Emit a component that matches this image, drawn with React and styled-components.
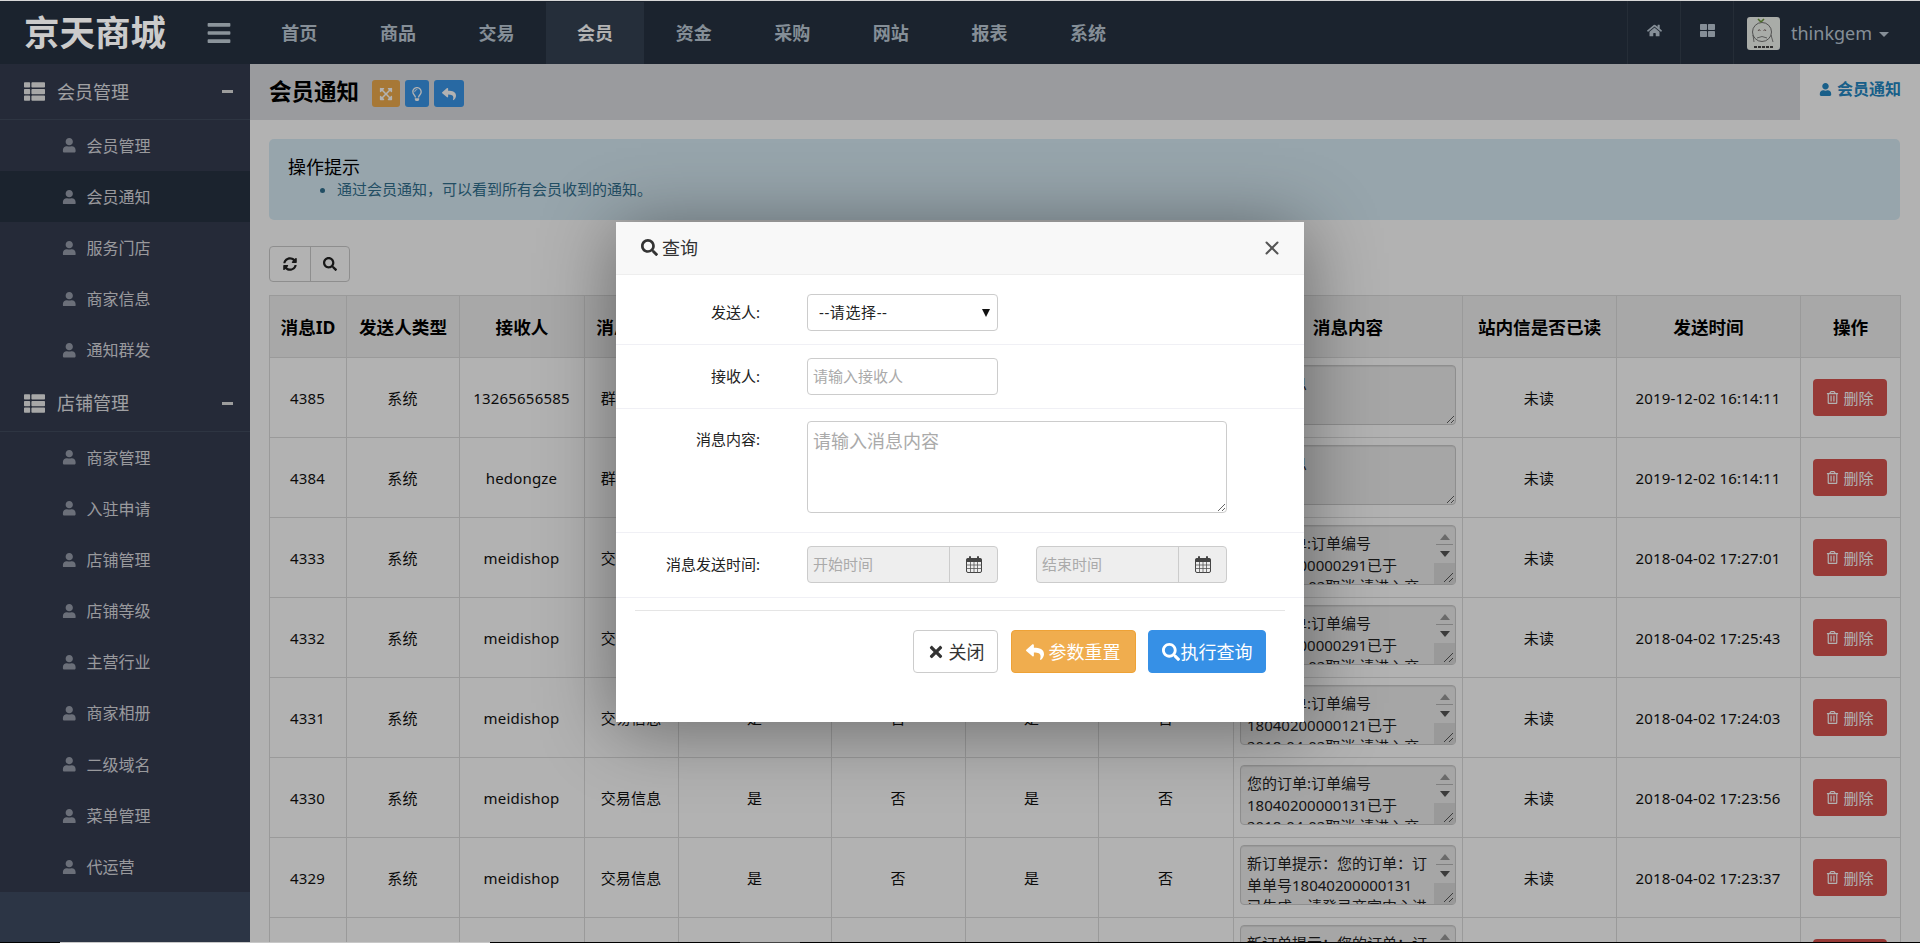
import React from 'react';
import styled, { createGlobalStyle } from 'styled-components';
import { FaBars, FaHome, FaThLarge, FaThList, FaUser, FaExpandArrowsAlt, FaRegLightbulb, FaReply, FaSyncAlt, FaSearch, FaRegTrashAlt, FaTimes } from 'react-icons/fa';
import { X } from 'lucide-react';

const Global = createGlobalStyle`
  html, body { margin: 0; padding: 0; background: #fff; }
  * { box-sizing: border-box; }
  body, input, select, textarea, button {
    font-family: "Noto Sans", "Noto Sans CJK SC", sans-serif;
  }
`;

const Page = styled.div`
  position: relative; width: 1920px; height: 943px; overflow: hidden;
  display: flex; flex-direction: column; font-size: 15px; line-height: 20px; color: #222;
`;
const TopLine = styled.div`flex: 0 0 1px; background: #d8d8d8;`;
const BottomStrip = styled.div`flex: 0 0 1px; display: flex; background: #000;`;
const StripPart = styled.div`flex: 0 0 ${p => p.$w}px; background: ${p => p.$c};`;

const Header = styled.header`flex: 0 0 63px; display: flex; align-items: stretch; background: #283343;`;
const Brand = styled.div`flex: 0 0 250px; display: flex; align-items: center; padding-left: 24px;`;
const Logo = styled.div`
  position: relative; z-index: 200; width: 182px; font-size: 35.5px; line-height: 48px; font-weight: 700;
  color: #cbcbcb; margin-top: -1px;
`;
const Burger = styled.div`display: flex; color: #c8d4de; font-size: 26px;`;
const NavItem = styled.div`
  flex: 0 0 98.6px; display: flex; align-items: center; justify-content: center;
  font-size: 18px; font-weight: 700; margin-top: 1px;
  color: ${p => p.$active ? '#fff' : '#bfccd8'};
  background: ${p => p.$active ? '#364254' : 'transparent'};
`;
const Spacer = styled.div`flex: 1;`;
const ToolIcon = styled.div`
  flex: 0 0 53px; display: flex; align-items: center; justify-content: center;
  border-left: 1px solid #36414f; color: #bfccd8; font-size: 15px; padding-bottom: 4px;
`;
const UserBox = styled.div`
  flex: 0 0 187px; display: flex; align-items: center; padding-left: 13px;
  border-left: 1px solid #36414f; color: #bfccd8; font-size: 18px;
`;
const Avatar = styled.svg`display: block; flex: none; width: 33px; height: 33px; border-radius: 3px; margin-right: 11px; margin-top: 1px;`;
const Caret = styled.span`
  margin-left: 7px; margin-top: 3px; width: 0; height: 0;
  border-left: 5px solid transparent; border-right: 5px solid transparent; border-top: 5px solid #bfccd8;
`;

const Body = styled.div`flex: 1; min-height: 0; display: flex;`;
const Sidebar = styled.aside`flex: 0 0 250px; background: #3f4c63;`;
const Menu = styled.nav`height: 828px; overflow: hidden; background: #353d51;`;
const SectionHead = styled.div`
  height: 56px; display: flex; align-items: center; padding: 0 17px 0 24px;
  border-bottom: 1px solid #434c5f; color: #e6e6ea; font-size: 18px; line-height: 26px;
`;
const SectionIcon = styled.span`display: flex; font-size: 21px; color: #f0f0f0; margin-right: 12px;`;
const SectionText = styled.span`flex: 1;`;
const Minus = styled.span`width: 11px; height: 3px; background: #e0e0e0;`;
const Item = styled.div`
  height: 51.2px; display: flex; align-items: center; padding-left: 62px;
  font-size: 16px; color: #dcdce0;
  background: ${p => p.$active ? '#283343' : 'transparent'};
`;
const ItemIcon = styled.span`display: flex; font-size: 14.5px; color: #9aa0ae; margin-right: 10px;`;

const Main = styled.main`flex: 1; min-width: 0; overflow: hidden;`;
const TitleRow = styled.div`height: 56px; display: flex;`;
const TitleBar = styled.div`flex: 1; display: flex; align-items: center; padding-left: 19px; background: #dddfe3;`;
const Title = styled.h1`margin: 0 13px 0 0; font-size: 22.5px; line-height: 30px; font-weight: 700; color: #000;`;
const MiniBtn = styled.span`
  height: 27px; width: ${p => p.$w}px; margin-right: ${p => p.$gap || 5}px; margin-top: 3px;
  display: flex; align-items: center; justify-content: center;
  border-radius: 3px; background: ${p => p.$c}; color: #fff; font-size: 14px;
`;
const Tab = styled.div`
  flex: 0 0 120px; display: flex; align-items: center; padding: 0 0 6px 19px;
  color: #2488c4; font-size: 16px; font-weight: 700;
`;
const TabIcon = styled.span`display: flex; font-size: 13px; margin-right: 5px;`;

const Content = styled.div`padding: 19px 20px 0 19px;`;
const Alert = styled.div`
  height: 81px; padding: 16px 19px; border-radius: 5px; background: #d9edf7; margin-bottom: 26px; color: #000;
`;
const AlertTitle = styled.div`font-size: 18px; line-height: 24px;`;
const AlertList = styled.ul`margin: 0; padding-left: 49px; color: #31708f; font-size: 15px; line-height: 20px;`;
const Toolbar = styled.div`display: inline-flex; height: 36px; border: 1px solid #ccc; border-radius: 4px; margin-bottom: 13px; vertical-align: top;`;
const ToolBtn = styled.span`
  width: 39.5px; display: flex; align-items: center; justify-content: center; font-size: 14px; color: #222;
  border-left: ${p => p.$first ? 'none' : '1px solid #ccc'};
`;

const Table = styled.table`width: 1631px; table-layout: fixed; border-collapse: collapse;`;
const Col = styled.col`width: ${p => p.$w}px;`;
const Th = styled.th`
  height: 62px; padding: 0; border: 1px solid #ddd; background: #f1f1f1; font-size: 17.6px; line-height: 22px; font-weight: 700; color: #000;
`;
const Td = styled.td`
  height: 80px; padding: 0 7px 0 6px; border: 1px solid #ddd; text-align: center; vertical-align: middle; font-size: 15px; color: #111; letter-spacing: .18px;
`;
const MsgBox = styled.div`position: relative; width: 216px; height: 60px; margin-top: -5px;`;
const MsgArea = styled.textarea`
  display: block; width: 216px; height: 60px; padding: 7px ${p => p.$scroll ? 24 : 6}px 7px 6px; border: 1px solid #ccc; border-radius: 4px;
  background: #eee; color: #222; font-size: 15px; line-height: 21.7px; overflow: hidden; outline: none; resize: both;
  box-shadow: inset 0 1px 1px rgba(0,0,0,.08);
`;
const Scroll = styled.div`
  position: absolute; top: 1px; right: 1px; bottom: 1px; width: 21px;
  display: flex; flex-direction: column; align-items: center;
`;
const ArrowUp = styled.span`
  margin-top: 8px; width: 0; height: 0; border-left: 5px solid transparent; border-right: 5px solid transparent; border-bottom: 6px solid #9a9a9a;
`;
const ScrollLine = styled.span`width: 17px; height: 1px; background: #b8b8b8; margin-top: 4px;`;
const ArrowDown = styled.span`
  margin-top: 6px; width: 0; height: 0; border-left: 5px solid transparent; border-right: 5px solid transparent; border-top: 6px solid #555;
`;
const Thumb = styled.span`
  margin-top: 6px; align-self: stretch; flex: 1; background: #dcdcdc; position: relative;
`;
const Grip = styled.svg`position: absolute; right: 1px; bottom: 1px; width: 12px; height: 12px; display: block;`;
const DelBtn = styled.span`
  display: inline-flex; align-items: center; justify-content: center; gap: 4px;
  width: 74px; height: 37px; border-radius: 4px; background: #d9534f; color: #fff; font-size: 15px; letter-spacing: 0;
`;
const DelIcon = styled.span`display: flex; font-size: 13px;`;

const Overlay = styled.div`position: absolute; left: 0; right: 0; top: 1px; bottom: 1px; background: rgba(0,0,0,.3); z-index: 100;`;
const Modal = styled.div`
  position: absolute; left: 616px; top: 222px; width: 688px; height: 500px; z-index: 110;
  background: #fff; box-shadow: 0 6px 70px rgba(0,0,0,.42); color: #333;
`;
const ModalHead = styled.div`
  height: 53px; display: flex; align-items: center; padding: 0 21px 1px 25px;
  background: #f8f8f8; border-bottom: 1px solid #eee; font-size: 18px; color: #333;
`;
const HeadIcon = styled.span`display: flex; font-size: 17px; margin-right: 4px;`;
const HeadTitle = styled.span`flex: 1;`;
const Row = styled.div`
  display: flex; align-items: ${p => p.$top ? 'flex-start' : 'center'};
  height: ${p => p.$h}px; padding-bottom: ${p => p.$pb || 0}px; padding-top: ${p => p.$pt || 0}px;
  border-bottom: 1px solid #f0f0f5;
`;
const Label = styled.label`
  flex: 0 0 144px; text-align: right; font-size: 15px; line-height: 37px; color: #222; margin-right: 47px;
`;
const SelectWrap = styled.div`position: relative; width: 191px; height: 37px;`;
const Select = styled.select`
  width: 100%; height: 100%; appearance: none; -webkit-appearance: none; background: #fff; padding: 0 0 0 11px;
  border: 1px solid #ccc; border-radius: 4px; font-size: 15px; color: #222; outline: none; letter-spacing: .6px;
`;
const SelectArrow = styled.span`
  position: absolute; right: 8px; top: 15px; width: 0; height: 0;
  border-left: 4px solid transparent; border-right: 4px solid transparent; border-top: 8px solid #111;
`;
const Input = styled.input`
  width: 191px; height: 37px; border: 1px solid #ccc; border-radius: 4px; padding: 0 5px; font-size: 15px; outline: none;
  &::placeholder { color: #aaa; }
`;
const Area = styled.textarea`
  display: block; width: 420px; height: 92px; border: 1px solid #ccc; border-radius: 4px; padding: 6px 5px; font-size: 18px; line-height: 26px; outline: none;
  &::placeholder { color: #aaa; }
`;
const DateGroup = styled.div`
  width: 191px; height: 37px; display: flex; border: 1px solid #ccc; border-radius: 4px; background: #eee;
  margin-right: ${p => p.$gap || 0}px; overflow: hidden;
`;
const DateInput = styled.input`
  flex: 1; min-width: 0; border: none; background: transparent; padding: 0 5px; font-size: 15px; outline: none;
  &::placeholder { color: #aaa; }
`;
const Addon = styled.span`flex: 0 0 48px; display: flex; align-items: center; justify-content: center; border-left: 1px solid #ccc; color: #444;`;
const Hr = styled.hr`margin: 12px 19px 19px; border: none; border-top: 1px solid #e5e5e5;`;
const Footer = styled.div`display: flex; justify-content: flex-end; gap: 12.5px; padding-right: 38px;`;
const FootBtn = styled.button`
  width: ${p => p.$w}px; height: 43px; padding: 0; display: flex; align-items: center; justify-content: center;
  gap: ${p => p.$gap}px; border-radius: 4px; font-size: 18px; line-height: 24px;
  border: 1px solid ${p => p.$border}; background: ${p => p.$bg}; color: ${p => p.$fg};
`;

const GripSvg = () => (
  <Grip viewBox="0 0 12 12"><path d="M2 11 L11 2 M7 11 L11 7" stroke="#555" strokeWidth="1" fill="none" /></Grip>
);

const CalendarIcon = () => (
  <svg width="16" height="17" viewBox="0 0 16 17">
    <rect x="0.5" y="2.5" width="15" height="14" rx="1.5" fill="none" stroke="#444" />
    <rect x="0.5" y="2.5" width="15" height="3.5" fill="#444" />
    <path d="M0.5 9H15.5M0.5 12.5H15.5M4.5 6V16.5M8 6V16.5M11.5 6V16.5" stroke="#555" strokeWidth="0.8" fill="none" />
    <rect x="3" y="0" width="2" height="4.5" rx="1" fill="#444" />
    <rect x="11" y="0" width="2" height="4.5" rx="1" fill="#444" />
  </svg>
);

const AvatarArt = () => (
  <Avatar viewBox="0 0 33 33">
    <rect width="33" height="33" fill="#f2f6f1" />
    <circle cx="15" cy="15" r="9.5" fill="none" stroke="#555" strokeWidth="0.8" />
    <path d="M14 5 L11 2 M14 5 L17 2" stroke="#6d9a3c" strokeWidth="1.6" />
    <path d="M11 14 l1.2 -1.5 l1.2 1.5 M16.6 14 l1.2 -1.5 l1.2 1.5" stroke="#533" strokeWidth="0.7" fill="none" />
    <path d="M10 21 Q15 18 20 21 M24 18 L26 25 M6 18 L7 25" stroke="#555" strokeWidth="0.7" fill="none" />
    <path d="M7 30H26" stroke="#444" strokeWidth="2" strokeDasharray="3 1" />
  </Avatar>
);

const navs = ['首页', '商品', '交易', '会员', '资金', '采购', '网站', '报表', '系统'];
const menu1 = ['会员管理', '会员通知', '服务门店', '商家信息', '通知群发'];
const menu2 = ['商家管理', '入驻申请', '店铺管理', '店铺等级', '主营行业', '商家相册', '二级域名', '菜单管理', '代运营'];
const cols = [77, 113, 125, 94, 153, 134, 133, 135, 229, 154, 184, 100];
const heads = ['消息ID', '发送人类型', '接收人', '消息类型', '是否站内信', '是否短信', '是否邮件', '是否微信', '消息内容', '站内信是否已读', '发送时间', '操作'];
const canceled = n => `您的订单:订单编号\n${n}已于\n2018-04-02取消,请进入交易中心查看详情`;
const newOrder = '新订单提示：您的订单：订\n单单号18040200000131\n已生成，请登录商家中心进行处理';
const rows = [
  ['4385', '13265656585', '群发消息', '测试消息', false, '2019-12-02 16:14:11'],
  ['4384', 'hedongze', '群发消息', '测试消息', false, '2019-12-02 16:14:11'],
  ['4333', 'meidishop', '交易信息', canceled('18040200000291'), true, '2018-04-02 17:27:01'],
  ['4332', 'meidishop', '交易信息', canceled('18040200000291'), true, '2018-04-02 17:25:43'],
  ['4331', 'meidishop', '交易信息', canceled('18040200000121'), true, '2018-04-02 17:24:03'],
  ['4330', 'meidishop', '交易信息', canceled('18040200000131'), true, '2018-04-02 17:23:56'],
  ['4329', 'meidishop', '交易信息', newOrder, true, '2018-04-02 17:23:37'],
  ['4328', 'meidishop', '交易信息', newOrder, true, '2018-04-02 17:23:30'],
];

export default function App() {
  return (
    <Page>
      <Global />
      <TopLine />
      <Header>
        <Brand><Logo>京天商城</Logo><Burger><FaBars /></Burger></Brand>
        {navs.map(n => <NavItem key={n} $active={n === '会员'}>{n}</NavItem>)}
        <Spacer />
        <ToolIcon><FaHome /></ToolIcon>
        <ToolIcon><FaThLarge /></ToolIcon>
        <UserBox><AvatarArt />thinkgem<Caret /></UserBox>
      </Header>
      <Body>
        <Sidebar>
          <Menu>
            <SectionHead><SectionIcon><FaThList /></SectionIcon><SectionText>会员管理</SectionText><Minus /></SectionHead>
            {menu1.map(m => <Item key={m} $active={m === '会员通知'}><ItemIcon><FaUser /></ItemIcon>{m}</Item>)}
            <SectionHead><SectionIcon><FaThList /></SectionIcon><SectionText>店铺管理</SectionText><Minus /></SectionHead>
            {menu2.map(m => <Item key={m}><ItemIcon><FaUser /></ItemIcon>{m}</Item>)}
          </Menu>
        </Sidebar>
        <Main>
          <TitleRow>
            <TitleBar>
              <Title>会员通知</Title>
              <MiniBtn $w={28} $c="#f0ad4e"><FaExpandArrowsAlt /></MiniBtn>
              <MiniBtn $w={24} $c="#3a97ea"><FaRegLightbulb /></MiniBtn>
              <MiniBtn $w={30} $c="#3a97ea"><FaReply /></MiniBtn>
            </TitleBar>
            <Tab><TabIcon><FaUser /></TabIcon>会员通知</Tab>
          </TitleRow>
          <Content>
            <Alert>
              <AlertTitle>操作提示</AlertTitle>
              <AlertList><li>通过会员通知，可以看到所有会员收到的通知。</li></AlertList>
            </Alert>
            <Toolbar>
              <ToolBtn $first><FaSyncAlt /></ToolBtn>
              <ToolBtn><FaSearch /></ToolBtn>
            </Toolbar>
            <Table>
              <colgroup>{cols.map((w, i) => <Col key={i} $w={w} />)}</colgroup>
              <thead><tr>{heads.map(h => <Th key={h}>{h}</Th>)}</tr></thead>
              <tbody>
                {rows.map(r => (
                  <tr key={r[0]}>
                    <Td>{r[0]}</Td>
                    <Td>系统</Td>
                    <Td>{r[1]}</Td>
                    <Td>{r[2]}</Td>
                    <Td>是</Td><Td>否</Td><Td>是</Td><Td>否</Td>
                    <Td>
                      <MsgBox>
                        <MsgArea readOnly value={r[3]} $scroll={r[4]} />
                        {r[4] && (
                          <Scroll>
                            <ArrowUp /><ScrollLine /><ArrowDown />
                            <Thumb><GripSvg /></Thumb>
                          </Scroll>
                        )}
                      </MsgBox>
                    </Td>
                    <Td>未读</Td>
                    <Td>{r[5]}</Td>
                    <Td><DelBtn><DelIcon><FaRegTrashAlt /></DelIcon>删除</DelBtn></Td>
                  </tr>
                ))}
              </tbody>
            </Table>
          </Content>
        </Main>
      </Body>
      <BottomStrip>
        <StripPart $w={60} $c="#000" />
        <StripPart $w={430} $c="#c8c8c8" />
        <StripPart $w={250} $c="#000" />
        <StripPart $w={60} $c="#444" />
      </BottomStrip>
      <Overlay />
      <Modal>
        <ModalHead>
          <HeadIcon><FaSearch /></HeadIcon>
          <HeadTitle>查询</HeadTitle>
          <X size={22} strokeWidth={2.2} color="#555" />
        </ModalHead>
        <Row $h={70} $pt={5}>
          <Label>发送人:</Label>
          <SelectWrap>
            <Select defaultValue=""><option value="">--请选择--</option></Select>
            <SelectArrow />
          </SelectWrap>
        </Row>
        <Row $h={64} $pb={1}>
          <Label>接收人:</Label>
          <Input placeholder="请输入接收人" />
        </Row>
        <Row $h={124} $top $pt={12}>
          <Label>消息内容:</Label>
          <Area placeholder="请输入消息内容" />
        </Row>
        <Row $h={65} $pb={2}>
          <Label>消息发送时间:</Label>
          <DateGroup $gap={38}><DateInput readOnly placeholder="开始时间" /><Addon><CalendarIcon /></Addon></DateGroup>
          <DateGroup><DateInput readOnly placeholder="结束时间" /><Addon><CalendarIcon /></Addon></DateGroup>
        </Row>
        <Hr />
        <Footer>
          <FootBtn $w={85} $gap={4} $border="#ccc" $bg="#fff" $fg="#333"><FaTimes />关闭</FootBtn>
          <FootBtn $w={125} $gap={5} $border="#eea236" $bg="#f0ad4e" $fg="#fff"><FaReply />参数重置</FootBtn>
          <FootBtn $w={118} $gap={1} $border="#3690e6" $bg="#3690e6" $fg="#fff"><FaSearch />执行查询</FootBtn>
        </Footer>
      </Modal>
    </Page>
  );
}
